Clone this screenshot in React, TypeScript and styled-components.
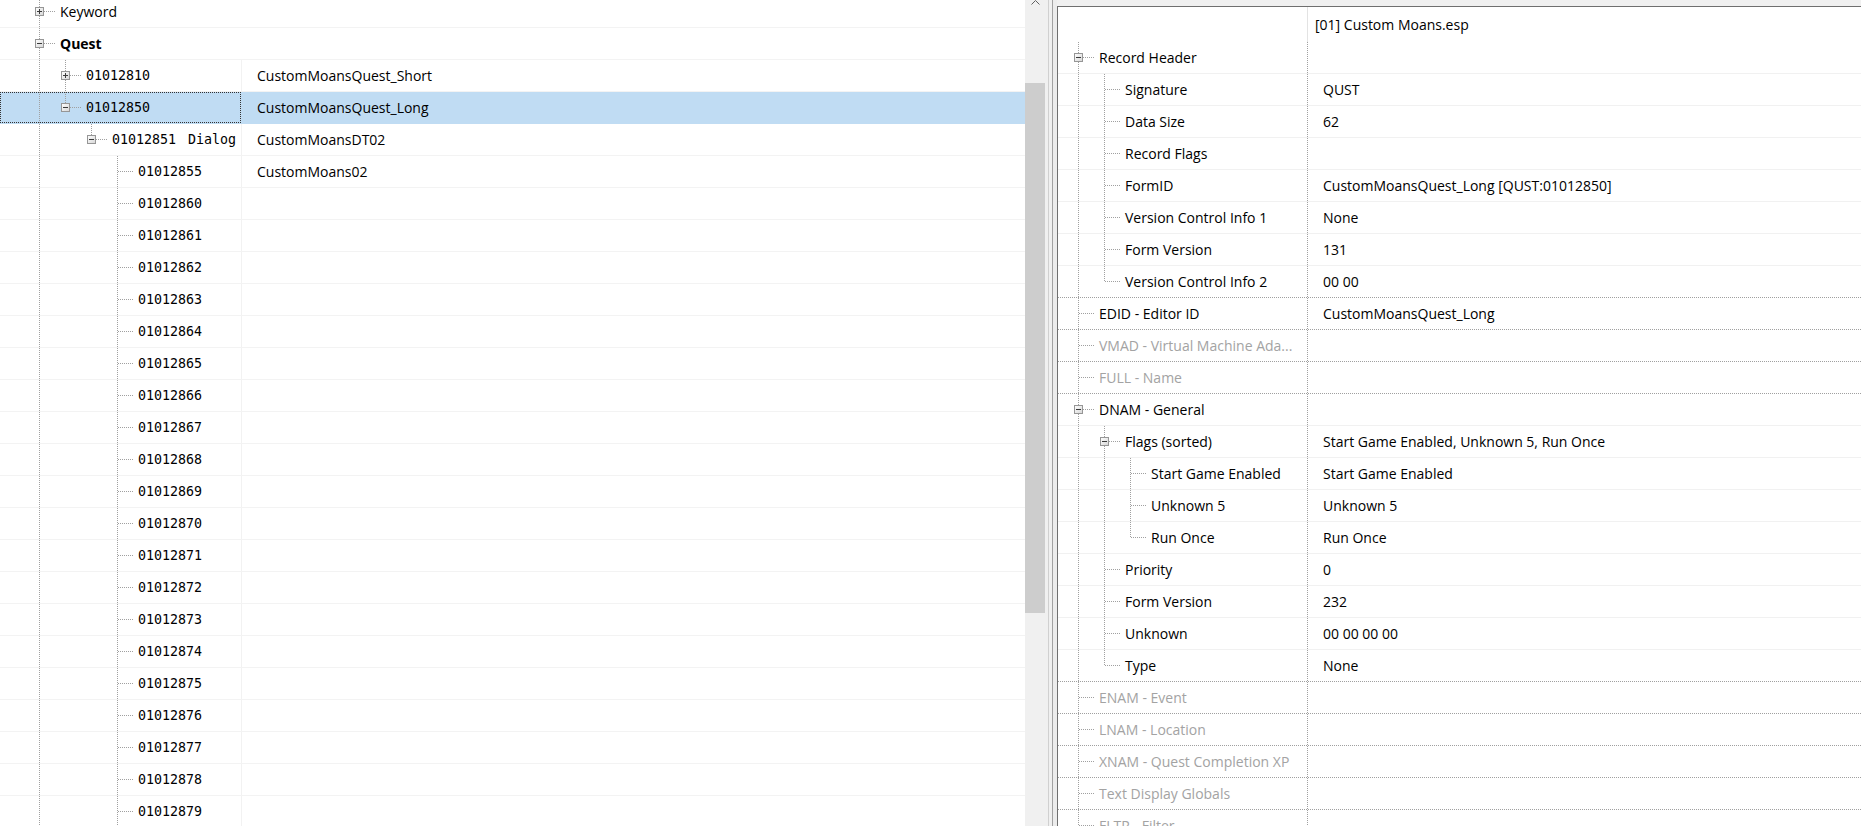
import React from 'react';
import styled, { createGlobalStyle } from 'styled-components';

const GlobalStyle = createGlobalStyle`
  html, body {
    margin: 0;
    padding: 0;
    background: #ffffff;
    overflow: hidden;
  }
  body {
    font-family: 'Open Sans', 'Noto Sans', sans-serif;
    font-size: 14px;
    color: #000000;
  }
`;

type GuideKind = 'pipe' | 'blank' | 'tee' | 'elbow';
type ButtonKind = 'plus' | 'minus';

type Node = {
  label: string;
  value?: string;
  tag?: string;
  mono?: boolean;
  bold?: boolean;
  dim?: boolean;
  collapsed?: boolean;
  selected?: boolean;
  children?: Node[];
  childrenMore?: boolean;
};

type FlatRow = {
  node: Node;
  depth: number;
  guides: GuideKind[];
  button?: ButtonKind;
};

const flatten = (nodes: Node[], more: boolean, trail: boolean[] = []): FlatRow[] =>
  nodes.flatMap((node, i) => {
    const last = i === nodes.length - 1 && !more;
    const guides: GuideKind[] = [
      ...trail.map((p): GuideKind => (p ? 'pipe' : 'blank')),
      last ? 'elbow' : 'tee',
    ];
    let button: ButtonKind | undefined;
    if (node.collapsed) button = 'plus';
    else if (node.children) button = 'minus';
    const row: FlatRow = { node, depth: trail.length, guides, button };
    const kids = node.children ? flatten(node.children, !!node.childrenMore, [...trail, !last]) : [];
    return [row, ...kids];
  });

// ---------- data ----------

const dialogEntries: Node[] = [
  { label: '01012855', mono: true, value: 'CustomMoans02' },
  ...Array.from({ length: 20 }, (_, i) => ({ label: String(1012860 + i).padStart(8, '0'), mono: true })),
];

const leftTree: Node[] = [
  { label: 'Keyword', collapsed: true },
  {
    label: 'Quest',
    bold: true,
    children: [
      { label: '01012810', mono: true, collapsed: true, value: 'CustomMoansQuest_Short' },
      {
        label: '01012850',
        mono: true,
        selected: true,
        value: 'CustomMoansQuest_Long',
        children: [
          {
            label: '01012851',
            tag: 'Dialog',
            mono: true,
            value: 'CustomMoansDT02',
            children: dialogEntries,
            childrenMore: true,
          },
        ],
      },
    ],
  },
];

const rightTree: Node[] = [
  {
    label: 'Record Header',
    children: [
      { label: 'Signature', value: 'QUST' },
      { label: 'Data Size', value: '62' },
      { label: 'Record Flags' },
      { label: 'FormID', value: 'CustomMoansQuest_Long [QUST:01012850]' },
      { label: 'Version Control Info 1', value: 'None' },
      { label: 'Form Version', value: '131' },
      { label: 'Version Control Info 2', value: '00 00' },
    ],
  },
  { label: 'EDID - Editor ID', value: 'CustomMoansQuest_Long' },
  { label: 'VMAD - Virtual Machine Ada...', dim: true },
  { label: 'FULL - Name', dim: true },
  {
    label: 'DNAM - General',
    children: [
      {
        label: 'Flags (sorted)',
        value: 'Start Game Enabled, Unknown 5, Run Once',
        children: [
          { label: 'Start Game Enabled', value: 'Start Game Enabled' },
          { label: 'Unknown 5', value: 'Unknown 5' },
          { label: 'Run Once', value: 'Run Once' },
        ],
      },
      { label: 'Priority', value: '0' },
      { label: 'Form Version', value: '232' },
      { label: 'Unknown', value: '00 00 00 00' },
      { label: 'Type', value: 'None' },
    ],
  },
  { label: 'ENAM - Event', dim: true },
  { label: 'LNAM - Location', dim: true },
  { label: 'XNAM - Quest Completion XP', dim: true },
  { label: 'Text Display Globals', dim: true },
  { label: 'FLTR - Filter', dim: true },
];

const leftRows = flatten(leftTree, true);
const rightRows = flatten(rightTree, true);

// ---------- frame ----------

const Window = styled.div`
  display: flex;
  width: 1861px;
  height: 826px;
  overflow: hidden;
  background: #f0f0f0;
`;

const LeftPane = styled.section`
  width: 1025px;
  flex-shrink: 0;
  background: #ffffff;
  overflow: hidden;
`;

const LeftList = styled.div`
  margin-top: -4px;
`;

const Scrollbar = styled.div`
  width: 20px;
  flex-shrink: 0;
  display: flex;
  flex-direction: column;
  background: #f0f0f0;
`;

const ScrollArrow = styled.div`
  height: 17px;
  margin-top: -6px;
  display: flex;
  align-items: center;
  justify-content: center;
`;

const ScrollThumb = styled.div`
  margin-top: 72px;
  height: 530px;
  background: #cdcdcd;
`;

const Splitter = styled.div`
  width: 12px;
  flex-shrink: 0;
  background: linear-gradient(
    to right,
    #f0f0f0 0 3px,
    #d0d0d0 3px 4px,
    #f0f0f0 4px 7px,
    #a2a2a2 7px 8px,
    #ececec 8px 12px
  );
`;

const RightArea = styled.div`
  flex: 1;
  display: flex;
  flex-direction: column;
  padding-top: 6px;
  min-width: 0;
`;

const RightPane = styled.section`
  flex: 1;
  background: #ffffff;
  border-top: 1px solid #6f6f6f;
  border-left: 1px solid #6f6f6f;
  overflow: hidden;
`;

// ---------- tree guides ----------

const GuideSvg = styled.svg`
  flex-shrink: 0;
  overflow: visible;
  shape-rendering: crispEdges;
  align-self: flex-start;

  line.dot {
    stroke: #a0a0a0;
    stroke-width: 1;
    stroke-dasharray: 1 1;
  }
`;

const Guide = ({ kind, button }: { kind: GuideKind; button?: ButtonKind }) => (
  <GuideSvg width={26} height={32} viewBox="0 0 26 32">
    {kind !== 'blank' && (
      <line className="dot" x1={13.5} y1={0} x2={13.5} y2={kind === 'elbow' ? 16 : 32} />
    )}
    {(kind === 'tee' || kind === 'elbow') && (
      <line className="dot" x1={14} y1={15.5} x2={30} y2={15.5} />
    )}
    {button && (
      <g>
        <defs>
          <linearGradient id="btnFill" x1="0" y1="0" x2="1" y2="1">
            <stop offset="0" stopColor="#ffffff" />
            <stop offset="1" stopColor="#d6d6d6" />
          </linearGradient>
        </defs>
        <rect x={9.5} y={11.5} width={8} height={8} fill="url(#btnFill)" stroke="#969696" />
        <line x1={11} y1={15.5} x2={16} y2={15.5} stroke="#3a3a3a" />
        {button === 'plus' && <line x1={13.5} y1={13} x2={13.5} y2={18} stroke="#3a3a3a" />}
      </g>
    )}
  </GuideSvg>
);

const Guides = ({ row }: { row: FlatRow }) => (
  <>
    {row.guides.map((g, i) => (
      <Guide key={i} kind={g} button={i === row.guides.length - 1 ? row.button : undefined} />
    ))}
  </>
);

// ---------- left grid ----------

const LeftRow = styled.div<{ $selected?: boolean }>`
  display: flex;
  height: 32px;
  box-sizing: border-box;
  border-bottom: 1px solid ${(p) => (p.$selected ? '#c0dcf3' : '#f3f3f3')};
  background: ${(p) => (p.$selected ? '#c0dcf3' : 'transparent')};
`;

const IdCell = styled.div<{ $focused?: boolean }>`
  width: 241px;
  flex-shrink: 0;
  display: flex;
  align-items: center;
  padding-left: 26px;
  box-sizing: border-box;
  outline: ${(p) => (p.$focused ? '1px dotted #333333' : 'none')};
  outline-offset: -1px;
`;

const NameCell = styled.div<{ $divider?: boolean }>`
  flex: 1;
  display: flex;
  align-items: center;
  padding-left: 16px;
  box-shadow: ${(p) => (p.$divider ? 'inset 1px 0 0 #f2f2f2' : 'none')};
  white-space: nowrap;
`;

const LeftText = styled.span<{ $mono?: boolean; $bold?: boolean; $flush?: boolean }>`
  margin-left: ${(p) => (p.$flush ? '0' : '8px')};
  white-space: nowrap;
  font-family: ${(p) =>
    p.$mono ? "'DejaVu Sans Mono', 'Liberation Mono', monospace" : "'Open Sans', 'Noto Sans', sans-serif"};
  font-size: ${(p) => (p.$mono ? '13.3px' : '14px')};
  font-weight: ${(p) => (p.$bold ? 700 : 400)};
  line-height: 31px;
`;

const Tag = styled.span`
  margin-left: 12px;
`;

// ---------- right grid ----------

const HeaderRow = styled.div`
  display: flex;
  height: 35px;
`;

const HeaderBlank = styled.div`
  width: 250px;
  flex-shrink: 0;
  box-sizing: border-box;
  border-right: 1px solid #e3e3e3;
`;

const HeaderTitle = styled.div`
  display: flex;
  align-items: center;
  padding-left: 7px;
  white-space: nowrap;
`;

const RightRow = styled.div<{ $dotted?: boolean }>`
  display: flex;
  height: 32px;
  box-sizing: border-box;
  border-bottom: ${(p) => (p.$dotted ? '1px dotted #a0a0a0' : '1px solid #f1f1f1')};
`;

const LabelCell = styled.div`
  width: 250px;
  flex-shrink: 0;
  display: flex;
  align-items: flex-start;
  padding-left: 7px;
  box-sizing: border-box;
  border-right: 1px dotted #a0a0a0;
  overflow: visible;
`;

const LabelText = styled.span<{ $dim?: boolean }>`
  margin-left: 8px;
  line-height: 31px;
  white-space: nowrap;
  color: ${(p) => (p.$dim ? '#a3a3a3' : '#000000')};
`;

const ValueCell = styled.div`
  flex: 1;
  padding-left: 15px;
  line-height: 31px;
  white-space: nowrap;
`;

// ---------- components ----------

const LeftGrid = () => (
  <LeftPane>
    <LeftList>
      {leftRows.map((row, i) => (
        <LeftRow key={i} $selected={row.node.selected}>
          <IdCell $focused={row.node.selected}>
            <Guides row={row} />
            <LeftText $mono={row.node.mono} $bold={row.node.bold}>
              {row.node.label}
              {row.node.tag && <Tag>{row.node.tag}</Tag>}
            </LeftText>
          </IdCell>
          <NameCell $divider={row.depth > 0 && !row.node.selected}>
            {row.node.value && <LeftText $flush>{row.node.value}</LeftText>}
          </NameCell>
        </LeftRow>
      ))}
    </LeftList>
  </LeftPane>
);

const VScroll = () => (
  <Scrollbar>
    <ScrollArrow>
      <svg width="9" height="5" viewBox="0 0 9 5">
        <path d="M0.5 4.5 L4.5 0.5 L8.5 4.5" fill="none" stroke="#606060" strokeWidth="1" />
      </svg>
    </ScrollArrow>
    <ScrollThumb />
  </Scrollbar>
);

const RecordView = () => (
  <RightArea>
    <RightPane>
      <HeaderRow>
        <HeaderBlank />
        <HeaderTitle>[01] Custom Moans.esp</HeaderTitle>
      </HeaderRow>
      {rightRows.map((row, i) => (
        <RightRow key={i} $dotted={rightRows[i + 1]?.depth === 0}>
          <LabelCell>
            <Guides row={row} />
            <LabelText $dim={row.node.dim}>{row.node.label}</LabelText>
          </LabelCell>
          <ValueCell>{row.node.value}</ValueCell>
        </RightRow>
      ))}
    </RightPane>
  </RightArea>
);

const App = () => (
  <>
    <GlobalStyle />
    <Window>
      <LeftGrid />
      <VScroll />
      <Splitter />
      <RecordView />
    </Window>
  </>
);

export default App;
